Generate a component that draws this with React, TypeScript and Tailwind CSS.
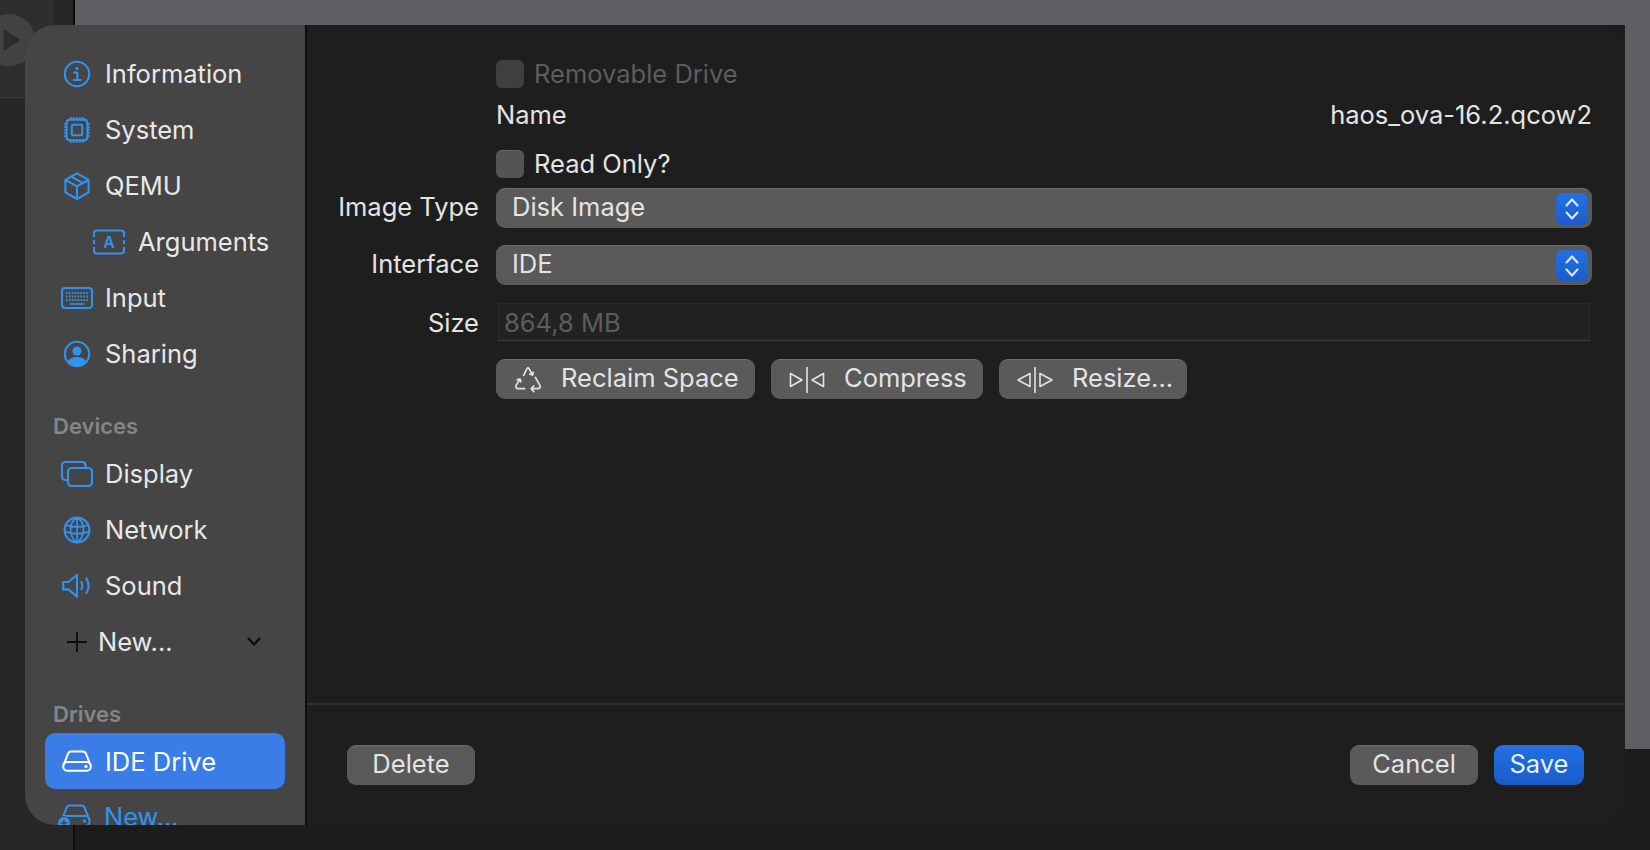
import type { ReactNode } from 'react';

const Blue = 'text-[#3093f0]';

// Небольшая обёртка для иконок сайдбара
function Icon({ children, w = 28, h = 28, view = '0 0 28 28' }: { children: ReactNode; w?: number; h?: number; view?: string }) {
  return (
    <svg width={w} height={h} viewBox={view} fill="none" stroke="currentColor" strokeWidth={2.1} strokeLinecap="round" strokeLinejoin="round">
      {children}
    </svg>
  );
}

const InfoIcon = () => (
  <Icon>
    <circle cx="14" cy="14" r="12.2" />
    <circle cx="14" cy="8.4" r="1.7" fill="currentColor" stroke="none" />
    <path d="M11.2 12.6H14.4V19.8M10.8 20H17.6" />
  </Icon>
);

const ChipIcon = () => (
  <Icon>
    <rect x="3.6" y="3.6" width="20.8" height="20.8" rx="3.4" />
    <rect x="8.8" y="8.8" width="10.4" height="10.4" rx="1" />
    <path d="M8 3V1M11 3V1M14 3V1M17 3V1M20 3V1M8 27V25M11 27V25M14 27V25M17 27V25M20 27V25M1 8H3M1 11H3M1 14H3M1 17H3M1 20H3M25 8H27M25 11H27M25 14H27M25 17H27M25 20H27" strokeWidth={1.5} strokeLinecap="butt" />
  </Icon>
);

const BoxIcon = () => (
  <Icon>
    <path d="M14 1.4L25.6 7.8V20.4L14 27L2.4 20.4V7.8L14 1.4Z" />
    <path d="M2.6 8L14 14.4L25.4 8M14 14.4V26.6M8.2 4.6L19.8 11.2" />
  </Icon>
);

const ArgsIcon = () => (
  <svg width="32" height="26" viewBox="0 0 32 26" fill="none" stroke="currentColor" strokeWidth={2.1}>
    <path d="M1 8V4.5Q1 1.5 4 1.5H28Q31 1.5 31 4.5V8M1 18V21.5Q1 24.5 4 24.5H28Q31 24.5 31 21.5V18M1 11V15M31 11V15" />
    <text x="16" y="19" textAnchor="middle" fontSize="16" fontFamily="Inter, sans-serif" fontWeight="600" fill="currentColor" stroke="none">A</text>
  </svg>
);

const KeyboardIcon = () => (
  <svg width="32" height="22" viewBox="0 0 32 22" fill="none" stroke="currentColor" strokeWidth={2}>
    <rect x="1" y="1" width="30" height="20" rx="3" />
    <path d="M5 6H27M5 9.5H27M5 13H27" strokeWidth={1.8} strokeDasharray="1.6 1.3" />
    <path d="M9 17H23" strokeWidth={1.6} />
  </svg>
);

const PersonIcon = () => (
  <Icon>
    <circle cx="14" cy="14" r="12.2" />
    <circle cx="14" cy="11" r="4.6" fill="currentColor" stroke="none" />
    <path d="M4.6 21.6C6.6 18.2 10 17 14 17C18 17 21.4 18.2 23.4 21.6C21 24.6 17.6 26.4 14 26.4C10.4 26.4 7 24.6 4.6 21.6Z" fill="currentColor" stroke="none" />
  </Icon>
);

const DisplayIcon = () => (
  <svg width="32" height="26" viewBox="0 0 32 26" fill="none" stroke="currentColor" strokeWidth={2.1}>
    <path d="M7 19H4.5Q1 19 1 15.5V4.5Q1 1 4.5 1H21Q24.5 1 24.5 4.5V7" />
    <rect x="7" y="7" width="24" height="18" rx="3.5" />
  </svg>
);

const GlobeIcon = () => (
  <Icon>
    <circle cx="14" cy="14" r="12.4" />
    <path d="M14 1.6C8 5 7.4 10 7.6 14C7.8 19 9.8 23.6 14 26.4M14 1.6C20 5 20.6 10 20.4 14C20.2 19 18.2 23.6 14 26.4M14 1.6V26.4M2.8 9C9 11.4 19 11.4 25.2 9M1.8 15.6C9 18 19 18 26.2 15.6" strokeWidth={1.7} />
  </Icon>
);

const SoundIcon = () => (
  <svg width="30" height="26" viewBox="0 0 30 26" fill="none" stroke="currentColor" strokeWidth={2.1} strokeLinecap="round" strokeLinejoin="round">
    <path d="M1.2 9V16.4H6.4L15 23.6V1.8L6.4 9H1.2Z" />
    <path d="M19.4 9C20.6 11.4 20.6 14 19.4 16.4M24.4 5.4C27.2 10 27.2 15.4 24.4 20" />
  </svg>
);

const DriveIcon = () => (
  <svg width="30" height="22" viewBox="0 0 30 22" fill="none" stroke="currentColor" strokeWidth={2} strokeLinejoin="round">
    <path d="M1.4 15.4L6 3.6Q6.8 1.4 9 1.4H21Q23.2 1.4 24 3.6L28.6 15.4" />
    <rect x="1.2" y="12" width="27.6" height="8.8" rx="4" />
    <circle cx="24" cy="16.4" r="1.6" fill="currentColor" stroke="none" />
  </svg>
);

const AddDriveIcon = () => (
  <svg width="34" height="26" viewBox="0 0 34 26" fill="none">
    <g stroke="currentColor" strokeWidth={2} strokeLinejoin="round">
      <path d="M5 15.4L9.6 3.6Q10.4 1.4 12.6 1.4H24.6Q26.8 1.4 27.6 3.6L32.2 15.4" />
      <rect x="4.8" y="12" width="27.6" height="10" rx="4" />
    </g>
    <circle cx="27.6" cy="17" r="1.6" fill="currentColor" />
    <circle cx="7" cy="19" r="6.4" fill="currentColor" stroke="#444444" strokeWidth={1} />
    <path d="M7 15.8V22.2M3.8 19H10.2" stroke="#444444" strokeWidth={1.6} />
  </svg>
);

const RecycleIcon = () => (
  <svg width="28" height="28" viewBox="0 0 28 28" fill="none" stroke="#e4e4e4" strokeWidth={1.7} strokeLinecap="round" strokeLinejoin="round">
    <path d="M9.6 9.4L13 2.6Q14 1 15 2.6L18.6 9M15.8 8.2L18.6 9L19.4 6.2" />
    <path d="M21.4 11.4L26 19.6Q27 22.4 24 22.6H17.4M19.8 20L17.2 22.6L19.8 25.6" />
    <path d="M10.6 22.6H4Q1.2 22.4 2 19.6L6 13M3.2 13.8L6 13L6.9 15.8" />
  </svg>
);

const CompressIcon = () => (
  <svg width="36" height="28" viewBox="0 0 36 28" fill="none" stroke="#e4e4e4" strokeWidth={1.6} strokeLinejoin="round">
    <path d="M1.5 7.5V20.5L13 14L1.5 7.5Z" />
    <path d="M18 1V27" />
    <path d="M34.5 7.5V20.5L23 14L34.5 7.5Z" />
  </svg>
);

const ResizeIcon = () => (
  <svg width="38" height="28" viewBox="0 0 38 28" fill="none" stroke="#e4e4e4" strokeWidth={1.6} strokeLinejoin="round">
    <path d="M14 7.5V20.5L2 14L14 7.5Z" />
    <path d="M19 1V27" />
    <path d="M24 7.5V20.5L36 14L24 7.5Z" />
  </svg>
);

function NavItem({ icon, label, indent = false }: { icon: ReactNode; label: string; indent?: boolean }) {
  return (
    <div className={`flex h-14 items-center ${indent ? 'pl-[68px]' : 'pl-[36px]'}`}>
      <span className={`flex w-[32px] shrink-0 justify-center ${Blue}`}>{icon}</span>
      <span className={`${indent ? 'ml-[13px]' : 'ml-[12px]'} text-[#e8e8e8]`}>{label}</span>
    </div>
  );
}

function SectionTitle({ children, className }: { children: ReactNode; className: string }) {
  return <div className={`pl-[28px] text-[22px] font-semibold leading-7 text-[#858585] ${className}`}>{children}</div>;
}

function Stepper() {
  return (
    <span className="flex h-8 w-8 items-center justify-center rounded-[7px] bg-gradient-to-b from-[#2371e6] to-[#1a5cc8]">
      <svg width="16" height="24" viewBox="0 0 16 24" fill="none" stroke="#d6e6ff" strokeWidth={2.2} strokeLinecap="round" strokeLinejoin="round">
        <path d="M2.5 8.5L8 2.5L13.5 8.5M2.5 15.5L8 21.5L13.5 15.5" />
      </svg>
    </span>
  );
}

function SelectRow({ label, value }: { label: string; value: string }) {
  return (
    <div className="flex items-center">
      <span className="w-[154px] -mt-[2px] text-right text-[#e4e4e4]">{label}</span>
      <div className="ml-[17px] flex h-10 flex-1 items-center justify-between rounded-[9px] border-t border-[#6f6f6f] bg-[#5a5a5a] pl-[16px] pr-[4px] text-[#e4e4e4]">
        <span className="-mt-[3px]">{value}</span>
        <Stepper />
      </div>
    </div>
  );
}

function ActionButton({ icon, label, className }: { icon: ReactNode; label: string; className: string }) {
  return (
    <div className={`flex h-10 items-center rounded-[9px] border-t border-[#6f6f6f] bg-[#5a5a5a] text-[#e4e4e4] ${className}`}>
      {icon}
      <span className="-mt-[3px]">{label}</span>
    </div>
  );
}

function FooterButton({ label, primary = false, className }: { label: string; primary?: boolean; className: string }) {
  return (
    <div className={`flex h-10 items-center justify-center rounded-[9px] ${primary ? 'bg-gradient-to-b from-[#2270e4] to-[#1a5cc8] text-[#e6f0ff]' : 'border-t border-[#6a6a6a] bg-[#5a5a5a] text-[#e4e4e4]'} ${className}`}>
      <span className="-mt-[3px]">{label}</span>
    </div>
  );
}

export default function App() {
  return (
    <div className="relative h-[850px] w-[1650px] overflow-hidden bg-[#1c1c1c] text-[25.5px] leading-8 font-['Inter','Liberation_Sans',sans-serif]">
      {/* Окно за диалогом */}
      <div className="absolute inset-y-0 left-0 w-[75px] border-r-2 border-[#0c0c0c] bg-[#262626]" />
      <div className="absolute left-0 top-0 h-[98px] w-[54px] border-b border-[#3a3a3a] bg-[#2e2e2e]" />
      <div className="absolute left-[-17px] top-[14px] flex h-[52px] w-[52px] items-center justify-center rounded-full bg-[#434343]">
        <svg width="18" height="22" viewBox="0 0 18 22" className="ml-[6px]">
          <path d="M1 1L17 11L1 21Z" fill="#2d2d2d" stroke="#2d2d2d" strokeLinejoin="round" />
        </svg>
      </div>
      <div className="absolute left-[75px] right-0 top-0 h-[25px] bg-[#5f5e63]" />
      <div className="absolute right-0 top-0 h-[749px] w-[25px] bg-[#5f5e63]" />

      {/* Диалог настроек */}
      <div className="absolute left-[25px] top-[25px] flex h-[800px] w-[1600px] overflow-hidden rounded-[30px] bg-[#1e1e1e]">
        <aside className="h-full w-[282px] shrink-0 overflow-hidden border-r-2 border-[#0c0c0c] bg-[#454545] pt-[21px]">
          <NavItem icon={<InfoIcon />} label="Information" />
          <NavItem icon={<ChipIcon />} label="System" />
          <NavItem icon={<BoxIcon />} label="QEMU" />
          <NavItem icon={<ArgsIcon />} label="Arguments" indent />
          <NavItem icon={<KeyboardIcon />} label="Input" />
          <NavItem icon={<PersonIcon />} label="Sharing" />
          <SectionTitle className="mt-[30px]">Devices</SectionTitle>
          <div className="mt-[6px]">
            <NavItem icon={<DisplayIcon />} label="Display" />
            <NavItem icon={<GlobeIcon />} label="Network" />
            <NavItem icon={<SoundIcon />} label="Sound" />
          </div>
          <div className="flex h-14 items-center pl-[41px] pr-[44px] text-[#e8e8e8]">
            <svg width="22" height="22" viewBox="0 0 22 22" stroke="#0d0d0d" strokeWidth={1.8} className="mr-[12px]">
              <path d="M11 1V21M1 11H21" />
            </svg>
            <span className="ml-[-2px] flex-1">New...</span>
            <svg width="14" height="10" viewBox="0 0 14 10" fill="none" stroke="#0d0d0d" strokeWidth={2.2} strokeLinecap="round" strokeLinejoin="round">
              <path d="M1.5 1.5L7 7.5L12.5 1.5" />
            </svg>
          </div>
          <SectionTitle className="mt-[30px]">Drives</SectionTitle>
          <div className="ml-[20px] mt-[5px] flex h-14 w-[240px] items-center rounded-[10px] bg-[#3a7de6] pl-[17px] text-white">
            <DriveIcon />
            <span className="ml-[13px] mt-[1px]">IDE Drive</span>
          </div>
          <div className={`flex h-14 items-center pl-[32px] ${Blue}`}>
            <AddDriveIcon />
            <span className="ml-[13px]">New...</span>
          </div>
        </aside>

        <main className="flex min-w-0 flex-1 flex-col">
          <div className="h-[678px] pl-[18px] pr-[33px] pt-[35px]">
            <div className="ml-[171px] flex h-7 items-center">
              <span className="h-7 w-7 rounded-[6px] bg-[#3f3f3f]" />
              <span className="ml-[10px] text-[#5d5d5d]">Removable Drive</span>
            </div>
            <div className="ml-[171px] mt-[11px] flex h-8 items-center justify-between text-[#e4e4e4]">
              <span>Name</span>
              <span>haos_ova-16.2.qcow2</span>
            </div>
            <div className="ml-[171px] mt-[19px] flex h-7 items-center">
              <span className="h-7 w-7 rounded-[6px] border-t border-[#666666] bg-[#545454]" />
              <span className="ml-[10px] text-[#e4e4e4]">Read Only?</span>
            </div>
            <div className="mt-[10px] flex flex-col gap-[17px]">
              <SelectRow label="Image Type" value="Disk Image" />
              <SelectRow label="Interface" value="IDE" />
            </div>
            <div className="mt-[18px] flex items-center">
              <span className="mt-[2px] w-[154px] text-right text-[#e4e4e4]">Size</span>
              <div className="ml-[19px] mr-[2px] flex h-[38px] flex-1 items-center border border-[#2a2a2a] border-b-[#3c3c3c] bg-[#222222] pl-[5px] pt-[2px] text-[#5d5d5d]">
                864,8 MB
              </div>
            </div>
            <div className="ml-[171px] mt-[18px] flex gap-[16px]">
              <ActionButton icon={<RecycleIcon />} label="Reclaim Space" className="w-[259px] pl-[18px] [&>span]:ml-[19px]" />
              <ActionButton icon={<CompressIcon />} label="Compress" className="w-[212px] pl-[18px] [&>span]:ml-[19px]" />
              <ActionButton icon={<ResizeIcon />} label="Resize..." className="w-[188px] pl-[17px] [&>span]:ml-[18px]" />
            </div>
          </div>
          <div className="flex flex-1 items-start justify-between border-t-2 border-[#2f2f2f] pl-[40px] pr-[41px] pt-[40px]">
            <FooterButton label="Delete" className="w-[128px]" />
            <div className="flex gap-[16px]">
              <FooterButton label="Cancel" className="w-[128px]" />
              <FooterButton label="Save" primary className="w-[90px]" />
            </div>
          </div>
        </main>
      </div>
    </div>
  );
}
